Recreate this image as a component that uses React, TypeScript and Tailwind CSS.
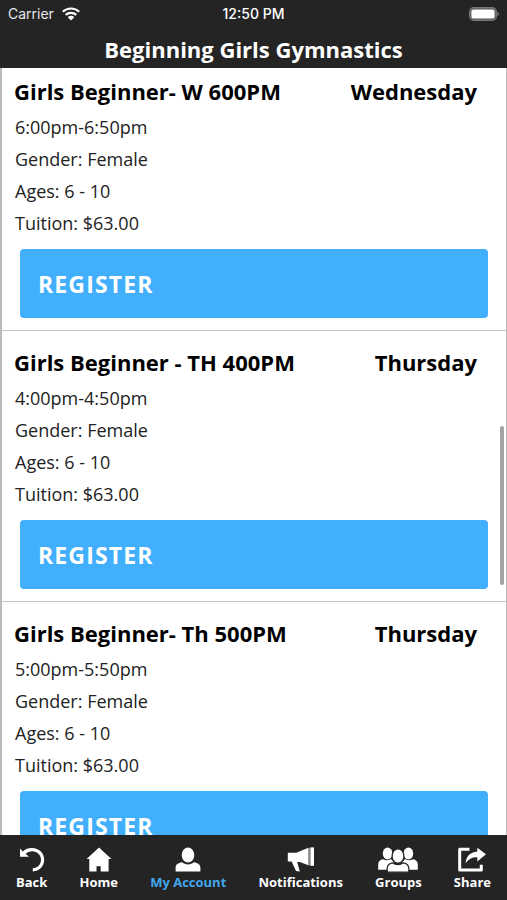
import React, { ReactNode } from "react";
import clsx from "clsx";

type GymClass = {
  name: string;
  day: string;
  time: string;
  gender: string;
  ages: string;
  tuition: string;
};

type NavItem = {
  label: string;
  icon: ReactNode;
  active?: boolean;
};

const classes: GymClass[] = [
  { name: "Girls Beginner- W 600PM", day: "Wednesday", time: "6:00pm-6:50pm", gender: "Female", ages: "6 - 10", tuition: "$63.00" },
  { name: "Girls Beginner - TH 400PM", day: "Thursday", time: "4:00pm-4:50pm", gender: "Female", ages: "6 - 10", tuition: "$63.00" },
  { name: "Girls Beginner- Th 500PM", day: "Thursday", time: "5:00pm-5:50pm", gender: "Female", ages: "6 - 10", tuition: "$63.00" },
];

const navItems: NavItem[] = [
  {
    label: "Back",
    icon: (
      <svg viewBox="0 0 26 26" className="h-[26px] w-[26px]" aria-hidden="true">
        <path d="M1 1.600 3.800 4.400C6.200 2.200 9.200 1 13 1c7 0 12.200 5 12.200 11.600 0 6.700-4.800 11.800-11.400 11.800v-3.200c4.700 0 8.200-3.700 8.200-8.500 0-4.900-3.800-8.500-8.800-8.500-2.600 0-4.800.9-6.600 2.600L10 9.800H1z" fill="currentColor" />
      </svg>
    ),
  },
  {
    label: "Home",
    icon: (
      <svg viewBox="0 0 26 26" className="h-[26px] w-[26px]" aria-hidden="true">
        <path d="M13 .6.6 12h2.700v12.500h7.200v-5.200h4.200v5.200h7.900V12h2.800z" fill="currentColor" />
      </svg>
    ),
  },
  {
    label: "My Account",
    active: true,
    icon: (
      <svg viewBox="0 0 26 26" className="h-[26px] w-[26px]" aria-hidden="true">
        <ellipse cx="13" cy="8" rx="6.300" ry="7.600" fill="currentColor" />
        <path d="M.6 24.500v-3.500c0-3.200 2.400-5.200 6.600-5.700 1.600 1.400 3.500 2.100 5.800 2.100s4.200-.7 5.800-2.100c4.200.5 6.600 2.500 6.600 5.700v3.500z" fill="currentColor" />
      </svg>
    ),
  },
  {
    label: "Notifications",
    icon: (
      <svg viewBox="0 0 28 26" className="h-[26px] w-[28px]" aria-hidden="true">
        <path d="M.8 5.800h8.400L21.400.8v17.400l-8.600-3.200h-2.600l2.600 9.400-3.800-.4L4.600 14.400H.8z" fill="currentColor" />
        <path d="M21.400.8h2v17.600h-2z" fill="currentColor" opacity=".45" />
        <path d="M23.400.4h3.600v18.400h-3.600z" fill="currentColor" />
      </svg>
    ),
  },
  {
    label: "Groups",
    icon: (
      <svg viewBox="0 0 40 26" className="h-[26px] w-[40px]" aria-hidden="true">
        <g fill="currentColor">
          <ellipse cx="9.600" cy="6.600" rx="4.800" ry="6" />
          <ellipse cx="30.400" cy="6.600" rx="4.800" ry="6" />
          <path d="M.2 22.800v-5.300c0-3 1.800-4.700 4.800-5.200 2.600 1.500 5.600 1.400 8-.2l3 3.500-5.500 7.200z" />
          <path d="M39.800 22.800v-5.300c0-3-1.800-4.700-4.800-5.200-2.600 1.500-5.600 1.400-8-.2l-3 3.500 5.500 7.200z" />
        </g>
        <g fill="currentColor" stroke="#242424" strokeWidth="1.200">
          <ellipse cx="20" cy="9" rx="5.900" ry="7.200" />
          <path d="M9.200 25.200v-3.600c0-3.300 2-5.300 5.400-5.800 3 2.300 7.800 2.300 10.800 0 3.400.5 5.400 2.500 5.400 5.800v3.600z" />
        </g>
      </svg>
    ),
  },
  {
    label: "Share",
    icon: (
      <svg viewBox="0 0 30 26" className="h-[26px] w-[30px]" aria-hidden="true">
        <path d="M12.500 2.200H2.700v20.700h21.600v-5.200" fill="none" stroke="currentColor" strokeWidth="3" strokeLinejoin="round" />
        <path d="M20.300.8 29 7.200l-8.700 7.200v-4.100C15.400 10 11.800 12 8.600 16.200 9 9.300 13 5 20.300 4.400z" fill="currentColor" />
      </svg>
    ),
  },
];

function StatusBar() {
  return (
    <div className="grid grid-cols-3 items-center px-2 pt-1 font-[Inter,sans-serif] text-sm leading-5 text-gray-200">
      <div className="flex items-center gap-2">
        <span>Carrier</span>
        <svg viewBox="0 0 18 14" className="h-[14px] w-[18px]" aria-label="Wi-Fi">
          <path d="M.8 4.800a11.800 11.800 0 0 1 16.400 0M3.700 7.900a7.700 7.700 0 0 1 10.600 0" fill="none" stroke="white" strokeWidth="2.200" />
          <path d="M9 13.500 5.700 10.200a4.700 4.700 0 0 1 6.600 0z" fill="white" />
        </svg>
      </div>
      <span className="text-center font-medium text-white">12:50 PM</span>
      <svg viewBox="0 0 30 14" className="h-[14px] w-[30px] justify-self-end" aria-label="Battery">
        <rect x=".7" y=".7" width="26.600" height="12.600" rx="4" fill="#555" stroke="#777" strokeWidth="1.400" />
        <rect x="2.400" y="2.400" width="23.200" height="9.200" rx="2.200" fill="white" />
        <path d="M28.400 4.800c2 .8 2 3.600 0 4.400z" fill="#777" />
      </svg>
    </div>
  );
}

function ClassCard({ item }: { item: GymClass }) {
  return (
    <li className="border-b border-[#c4c4c4] pt-[15px] pb-3">
      <div className="flex justify-between pr-[29px] pl-3 text-[22px] leading-8 font-bold text-black">
        <h2>{item.name}</h2>
        <span>{item.day}</span>
      </div>
      <div className="mt-1 pl-[13px] text-[18px] leading-8 text-[#222]">
        <p>{item.time}</p>
        <p>Gender: {item.gender}</p>
        <p>Ages: {item.ages}</p>
        <p>Tuition: {item.tuition}</p>
      </div>
      <div className="mt-[10px] px-[18px]">
        <button
          type="button"
          className="block h-[69px] w-full rounded bg-[#41affc] px-[18px] pt-0.5 text-left text-[23px] font-bold tracking-wider text-white"
        >
          REGISTER
        </button>
      </div>
    </li>
  );
}

export default function App() {
  return (
    <div className="flex h-screen flex-col bg-white font-['Open_Sans',sans-serif]">
      <header className="h-[68px] shrink-0 bg-[#242424] text-white">
        <StatusBar />
        <h1 className="pt-[9px] text-center text-[22px] leading-8 font-bold">Beginning Girls Gymnastics</h1>
      </header>

      <main className="relative min-h-0 flex-1 border-r border-l-2 border-[#bbb]">
        <div className="h-full overflow-y-auto [scrollbar-width:none]">
          {/* list sits slightly scrolled under the header */}
          <ul className="-mt-2">
            {classes.map((item) => (
              <ClassCard key={item.name} item={item} />
            ))}
          </ul>
        </div>
        <div className="absolute top-[358px] right-[2px] h-[159px] w-1 rounded-full bg-[#a3a3a3]" />
      </main>

      <nav className="flex h-[65px] shrink-0 justify-between bg-[#242424] px-4 pt-3">
        {navItems.map(({ label, icon, active }) => (
          <a key={label} href="#" className="flex flex-col items-center text-white">
            {icon}
            <span className={clsx("text-[13px] leading-[18px] font-bold", active && "text-[#41a6ee]")}>{label}</span>
          </a>
        ))}
      </nav>
    </div>
  );
}
